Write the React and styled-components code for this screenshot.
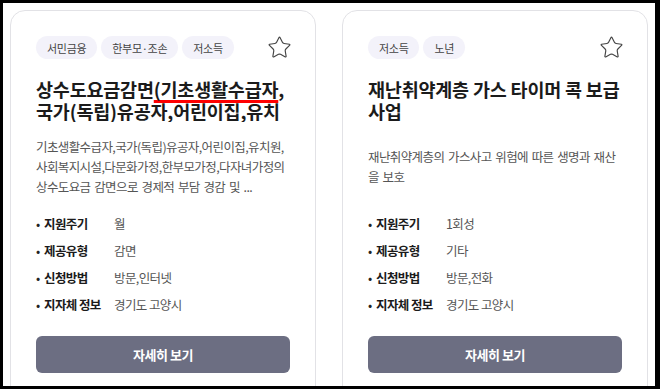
import React from 'react';
import styled, { createGlobalStyle } from 'styled-components';
import { Star } from 'lucide-react';

const GlobalStyle = createGlobalStyle`
  html, body {
    margin: 0;
    padding: 0;
    background: #000;
  }
  body {
    font-family: "Noto Sans CJK KR", "Noto Sans", sans-serif;
  }
`;

const Frame = styled.div`
  margin: 3px 5px 3px 3px;
  height: 383px;
  background: #fff;
  overflow: hidden;
  padding: 7px;
  box-sizing: border-box;
  display: grid;
  grid-template-columns: 306px 306px;
  column-gap: 26px;
  align-items: start;
`;

const Card = styled.div`
  border: 1px solid #e2e2e6;
  border-radius: 15px;
  padding: 25px 25px 30px;
  display: flex;
  flex-direction: column;
  background: #fff;
`;

const TopRow = styled.div`
  display: flex;
  align-items: center;
  justify-content: space-between;
  height: 23px;
`;

const Tags = styled.div`
  display: flex;
  gap: 4px;
`;

const Tag = styled.span`
  height: 23px;
  padding: 0 11px;
  border-radius: 12px;
  background: #f3f2fa;
  color: #444;
  font-size: 11px;
  letter-spacing: -0.3px;
  display: flex;
  align-items: center;
`;

const Fav = styled.button`
  border: none;
  background: none;
  padding: 0;
  margin-right: -2px;
  display: flex;
  color: #444;
  cursor: pointer;
`;

const Title = styled.h2`
  margin: 19px 0 0;
  font-size: 18.5px;
  line-height: 22px;
  height: 44px;
  flex-shrink: 0;
  overflow: hidden;
  font-weight: 700;
  letter-spacing: -0.2px;
  color: #1b1b1b;
`;

const Mark = styled.span`
  text-decoration: underline;
  text-decoration-color: #ff0000;
  text-decoration-thickness: 3px;
  text-underline-offset: 3px;
  text-decoration-skip-ink: none;
`;

const Desc = styled.div`
  margin-top: 15px;
  height: 60px;
  flex-shrink: 0;
  display: flex;
  align-items: center;
`;

const DescText = styled.p`
  margin: 0;
  font-size: 12.5px;
  line-height: 20px;
  letter-spacing: -0.6px;
  word-spacing: 1.5px;
  color: #555;
`;

const InfoList = styled.ul`
  list-style: none;
  margin: 17px 0 0;
  padding: 0;
  display: flex;
  flex-direction: column;
  gap: 7px;
`;

const InfoRow = styled.li`
  display: flex;
  align-items: center;
  font-size: 12.5px;
  line-height: 20px;
  letter-spacing: -0.6px;

  &::before {
    content: "•";
    width: 8px;
    flex-shrink: 0;
    color: #222;
    letter-spacing: 0;
  }
`;

const Label = styled.span`
  width: 70px;
  flex-shrink: 0;
  font-weight: 700;
  color: #1b1b1b;
`;

const Value = styled.span`
  color: #555;
`;

const DetailButton = styled.button`
  margin-top: 21px;
  height: 37px;
  flex-shrink: 0;
  border: none;
  border-radius: 6px;
  background: #6c6e82;
  color: #fff;
  font-family: inherit;
  font-size: 13px;
  font-weight: 700;
  letter-spacing: -0.5px;
  cursor: pointer;
`;

const cards = [
  {
    tags: ['서민금융', '한부모·조손', '저소득'],
    title: (
      <>
        상수도요금감면<Mark>(기초생활수급자</Mark>,국가(독립)유공자,어린이집,유치원,사회복지시설,다문화가정,한부모가정,다자녀가정)
      </>
    ),
    desc: '기초생활수급자,국가(독립)유공자,어린이집,유치원,사회복지시설,다문화가정,한부모가정,다자녀가정의 상수도요금 감면으로 경제적 부담 경감 및 ...',
    info: [
      ['지원주기', '월'],
      ['제공유형', '감면'],
      ['신청방법', '방문,인터넷'],
      ['지자체 정보', '경기도 고양시'],
    ],
  },
  {
    tags: ['저소득', '노년'],
    title: '재난취약계층 가스 타이머 콕 보급 사업',
    desc: '재난취약계층의 가스사고 위험에 따른 생명과 재산을 보호',
    info: [
      ['지원주기', '1회성'],
      ['제공유형', '기타'],
      ['신청방법', '방문,전화'],
      ['지자체 정보', '경기도 고양시'],
    ],
  },
];

const ServiceCard = ({ item }) => (
  <Card>
    <TopRow>
      <Tags>
        {item.tags.map((t) => (
          <Tag key={t}>{t}</Tag>
        ))}
      </Tags>
      <Fav aria-label="즐겨찾기">
        <Star size={25} strokeWidth={1.1} />
      </Fav>
    </TopRow>
    <Title>{item.title}</Title>
    <Desc>
      <DescText>{item.desc}</DescText>
    </Desc>
    <InfoList>
      {item.info.map(([k, v]) => (
        <InfoRow key={k}>
          <Label>{k}</Label>
          <Value>{v}</Value>
        </InfoRow>
      ))}
    </InfoList>
    <DetailButton>자세히 보기</DetailButton>
  </Card>
);

export default function App() {
  return (
    <>
      <GlobalStyle />
      <Frame>
        {cards.map((c, i) => (
          <ServiceCard key={i} item={c} />
        ))}
      </Frame>
    </>
  );
}
